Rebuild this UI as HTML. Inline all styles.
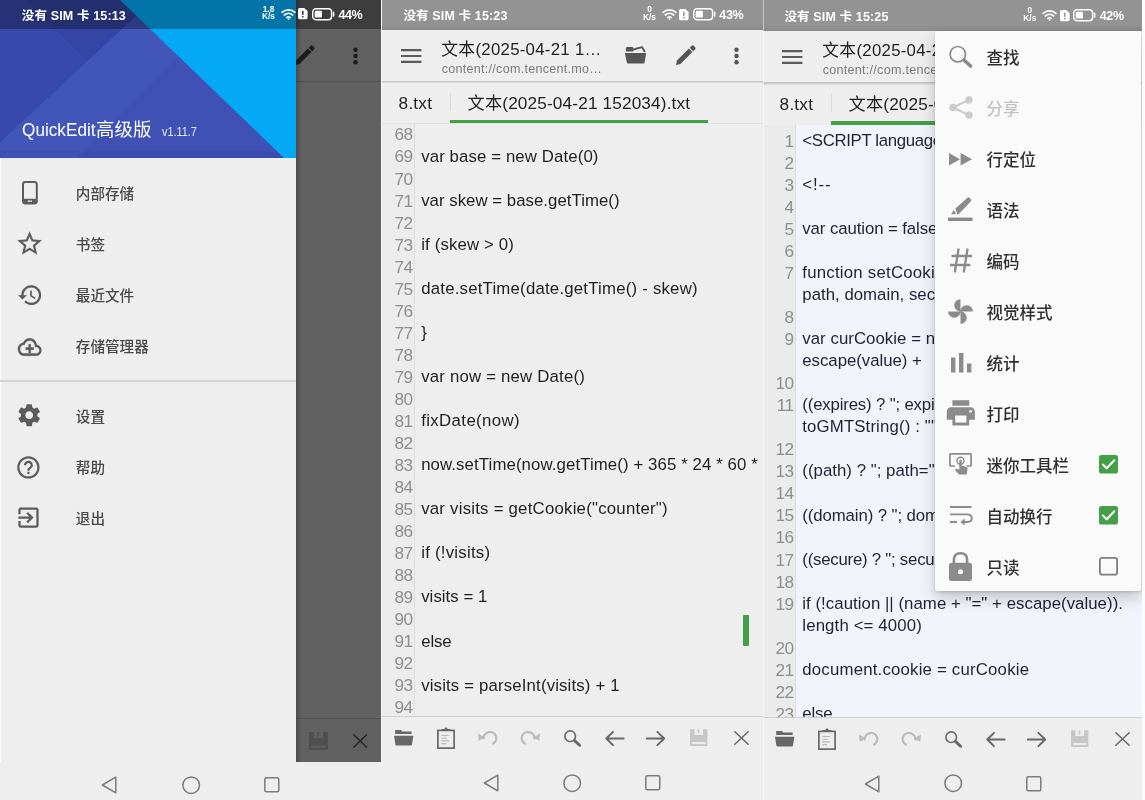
<!DOCTYPE html>
<html lang="zh-CN">
<head>
<meta charset="utf-8">
<title>QuickEdit</title>
<style>
*{box-sizing:border-box;margin:0;padding:0}
html,body{width:1145px;height:800px;overflow:hidden;background:#eeeeee}
body{position:relative;font-family:"Liberation Sans","Noto Sans CJK SC",sans-serif;color:#222}
.abs{position:absolute;display:block}
.panel{position:absolute;top:0;height:800px;overflow:hidden;background:#eeeeee;will-change:transform}
.t{position:absolute;display:block;white-space:nowrap;line-height:20px}
svg{position:absolute;overflow:visible;display:block}
</style>
</head>
<body>
<div class="panel" id="p1" style="left:0;width:382px">
<div class="abs" style="left:296px;top:0;width:85px;height:762px;background:#616161"></div><div class="abs" style="left:296px;top:0;width:85px;height:29px;background:#3d3d3d"></div><i class="abs" style="left:296px;top:80.500px;width:85px;height:1.600px;background:#505050"></i><i class="abs" style="left:296px;top:717.600px;width:85px;height:1.400px;background:#545454"></i><i class="abs" style="left:381px;top:0;width:1px;height:800px;background:#f7f7f7"></i><svg style="left:292.2px;top:42.8px" width="25" height="25" viewBox="0 0 25 25"><g transform="translate(12.500,12.500) rotate(-45)"><path d="M-13.400 0L-9.600 -2.500H7.300V2.500H-9.600Z" fill="#1d1d1d"/><path d="M8.400 -2.500H11.200Q12.600 -2.500 12.600 -1.100V1.100Q12.600 2.500 11.200 2.500H8.400Z" fill="#1d1d1d"/></g></svg><svg style="left:353.2px;top:46.5px" width="5" height="18" viewBox="0 0 5 18"><circle cx="2.500" cy="2.65" r="2.250" fill="#1d1d1d"/><circle cx="2.500" cy="9" r="2.250" fill="#1d1d1d"/><circle cx="2.500" cy="15.35" r="2.250" fill="#1d1d1d"/></svg><svg style="left:308.6px;top:731.8px" width="18.8" height="18" viewBox="0 0 18.8 18"><path d="M0 0H4.700V6.200H14.100V0H18.800V18H0Z" fill="#4f4f4f" /><rect x="8.300" y="0" width="1.700" height="4.400" fill="#4f4f4f"/><rect x="2" y="13.600" width="14.800" height="2.300" fill="#5e5e5e"/></svg><svg style="left:353px;top:733.5px" width="14.4" height="14" viewBox="0 0 14.4 14"><path d="M0.800 0.800L13.600 13.200M13.600 0.800L0.800 13.200" stroke="#262626" stroke-width="1.500" stroke-linecap="round"/></svg><i class="abs" style="left:296px;top:0;width:6px;height:762px;background:linear-gradient(90deg,rgba(0,0,0,.22),rgba(0,0,0,0))"></i><div class="abs" style="left:0;top:0;width:296px;height:762px;background:#eeeeee"></div><i class="abs" style="left:0;top:158px;width:1.200px;height:642px;background:#fbfbfb"></i><svg style="left:0px;top:0px" width="296" height="158" viewBox="0 0 296 158"><rect x="0" y="0" width="296" height="158" fill="#3f51b5"/><polygon points="0,0 153.400,0 0,142.500" fill="#3949ab"/><polygon points="26,0 153.400,0 87.400,61.400" fill="#3545a3"/><polygon points="153.400,0 235,0 77,158 0,158 0,142.500" fill="#4256ba"/><rect x="0" y="151.500" width="296" height="6.500" fill="#1a237e" fill-opacity="0.10"/><polygon points="120,0 296,0 296,158 284,158" fill="#03a9f4"/><rect x="0" y="0" width="296" height="29" fill="#000" fill-opacity="0.31"/></svg><span class="t" id="p1st" style="left:21.80px;top:5.77px;font-size:12.5px;color:#fff;font-weight:bold;letter-spacing:0.141px;">没有 SIM 卡 15:13</span><span class="t" style="left:259px;top:5.7px;width:19px;text-align:center;font-size:8.400px;line-height:7.400px;font-weight:bold;color:#fff;white-space:normal">1.8<br>K/s</span><svg style="left:281px;top:7.5px" width="15" height="12" viewBox="0 0 15 12"><path d="M1 4.300a9.800 9.800 0 0 1 13 0" fill="none" stroke="#fff" stroke-width="1.700" stroke-linecap="round"/><path d="M3.300 7a6.400 6.400 0 0 1 8.400 0" fill="none" stroke="#fff" stroke-width="1.700" stroke-linecap="round"/><path d="M5.600 9.500a3 3 0 0 1 3.800 0" fill="none" stroke="#fff" stroke-width="1.600" stroke-linecap="round"/><circle cx="7.500" cy="11" r="1" fill="#fff"/></svg><svg style="left:298.29999999999995px;top:8.1px" width="9.6" height="11.2" viewBox="0 0 9.6 11.2"><path d="M1.600 0H6.200L9.600 3V9.600A1.600 1.600 0 0 1 8 11.200H1.600A1.600 1.600 0 0 1 0 9.600V1.600A1.600 1.600 0 0 1 1.600 0Z" fill="#fff"/><rect x="4" y="2.800" width="1.600" height="4" fill="#3d3d3d"/><rect x="4" y="7.900" width="1.600" height="1.500" fill="#3d3d3d"/></svg><svg style="left:312px;top:7.699999999999999px" width="22.5" height="12.4" viewBox="0 0 22.5 12.4"><rect x="0.700" y="0.700" width="18.900" height="11" rx="3.200" fill="none" stroke="#fff" stroke-width="1.400"/><rect x="2.700" y="2.800" width="7.200" height="6.800" rx="1.200" fill="#fff"/><rect x="20.800" y="3.600" width="1.600" height="5.200" rx="0.800" fill="#fff"/></svg><span class="t" id="p1pct" style="left:338.60px;top:5.07px;font-size:12.5px;color:#fff;font-weight:bold;letter-spacing:-0.477px;">44%</span><span class="t" style="left:22.00px;top:120.22px;font-size:18.4px;color:#fff;letter-spacing:0;transform:scaleX(0.935);transform-origin:0 50%;">QuickEdit</span><span class="t" id="p1qc" style="left:96.00px;top:120.22px;font-size:18.4px;color:#fff;letter-spacing:0.071px;">高级版</span><span class="t" style="left:162.40px;top:122.03px;font-size:12.6px;color:#e8eaf6;letter-spacing:0;transform:scaleX(0.861);transform-origin:0 50%;">v1.11.7</span><span class="t" style="left:75.80px;top:183.69px;font-size:14.6px;color:#484848;font-weight:500;">内部存储</span><span class="t" style="left:75.80px;top:234.69px;font-size:14.6px;color:#484848;font-weight:500;">书签</span><span class="t" style="left:75.80px;top:285.69px;font-size:14.6px;color:#484848;font-weight:500;">最近文件</span><span class="t" style="left:75.80px;top:336.69px;font-size:14.6px;color:#484848;font-weight:500;">存储管理器</span><span class="t" style="left:75.80px;top:406.99px;font-size:14.6px;color:#484848;font-weight:500;">设置</span><span class="t" style="left:75.80px;top:457.99px;font-size:14.6px;color:#484848;font-weight:500;">帮助</span><span class="t" style="left:75.80px;top:508.99px;font-size:14.6px;color:#484848;font-weight:500;">退出</span><svg style="left:21.8px;top:180.5px" width="15.8" height="23.4" viewBox="0 0 15.8 23.4"><rect x="1" y="1" width="13.800" height="21.400" rx="2.400" fill="none" stroke="#5b5b5b" stroke-width="2"/><rect x="1" y="17.800" width="13.800" height="4.600" fill="#5b5b5b"/><rect x="5.600" y="19.600" width="4.600" height="1.200" rx="0.600" fill="#eeeeee"/></svg><svg style="left:14.7px;top:229.3px" width="29.2" height="29.2" viewBox="0 0 24 24"><path d="M22 9.240l-7.190-.62L12 2 9.190 8.630 2 9.240l5.460 4.730L5.820 21 12 17.270 18.180 21l-1.630-7.030L22 9.240zM12 15.400l-3.760 2.270 1-4.280-3.320-2.880 4.380-.38L12 6.100l1.710 4.040 4.380.38-3.320 2.880 1 4.280L12 15.400z" fill="#5b5b5b" stroke="#5b5b5b" stroke-width="0.15"/></svg><svg style="left:16.6px;top:281.9px" width="26.3" height="26.3" viewBox="0 0 24 24"><path d="M13 3c-4.970 0-9 4.030-9 9H1l3.890 3.890.07.14L9 12H6c0-3.870 3.130-7 7-7s7 3.130 7 7-3.130 7-7 7c-1.930 0-3.680-.79-4.940-2.060l-1.420 1.420C8.270 19.990 10.510 21 13 21c4.970 0 9-4.030 9-9s-4.030-9-9-9zm-1 5v5l4.280 2.540.72-1.210-3.500-2.080V8H12z" fill="#5b5b5b" stroke="#5b5b5b" stroke-width="0.1"/></svg><svg preserveAspectRatio="none" style="left:17.6px;top:333.8px" width="23.4" height="26" viewBox="0 0 24 24"><path d="M19.350 10.040C18.670 6.590 15.640 4 12 4 9.110 4 6.600 5.640 5.350 8.040 2.340 8.360 0 10.910 0 14c0 3.310 2.690 6 6 6h13c2.760 0 5-2.240 5-5 0-2.640-2.050-4.780-4.650-4.960zM19 18H6c-2.210 0-4-1.790-4-4s1.790-4 4-4h.71C7.370 7.690 9.480 6 12 6c3.040 0 5.500 2.460 5.500 5.500v.5H19c1.660 0 3 1.340 3 3s-1.340 3-3 3zM11 9.500h2v3h3v2h-3v3h-2v-3H8v-2h3z" fill="#5b5b5b" stroke="#5b5b5b" stroke-width="0.4"/></svg><i class="abs" style="left:0;top:380.400px;width:296px;height:1.200px;background:#d4d4d4"></i><svg style="left:16.0px;top:401.8px" width="26.4" height="26.4" viewBox="0 0 24 24"><path d="M19.430 12.980c.04-.32.07-.64.07-.98s-.03-.66-.07-.98l2.110-1.650c.19-.15.24-.42.120-.64l-2-3.460c-.12-.22-.39-.3-.61-.22l-2.490 1c-.52-.4-1.080-.73-1.690-.98l-.38-2.650C14.460 2.180 14.250 2 14 2h-4c-.25 0-.46.18-.49.42l-.38 2.650c-.61.25-1.170.59-1.690.98l-2.490-1c-.23-.09-.49 0-.61.22l-2 3.460c-.13.22-.07.49.120.64l2.110 1.650c-.04.32-.07.65-.07.98s.03.66.07.98l-2.110 1.650c-.19.15-.24.42-.12.64l2 3.460c.12.22.39.3.61.22l2.490-1c.52.4 1.080.73 1.690.98l.38 2.650c.03.24.24.42.49.42h4c.25 0 .46-.18.49-.42l.38-2.650c.61-.25 1.170-.59 1.690-.98l2.490 1c.23.09.49 0 .61-.22l2-3.460c.12-.22.07-.49-.12-.64l-2.110-1.650zM12 15.500c-1.930 0-3.500-1.570-3.500-3.500s1.570-3.500 3.500-3.500 3.500 1.570 3.500 3.500-1.570 3.500-3.500 3.500z" fill="#5b5b5b" /></svg><svg style="left:15.3px;top:453.6px" width="26.8" height="26.8" viewBox="0 0 24 24"><path d="M11 18h2v-2h-2v2zm1-16C6.480 2 2 6.480 2 12s4.480 10 10 10 10-4.480 10-10S17.520 2 12 2zm0 18c-4.410 0-8-3.590-8-8s3.590-8 8-8 8 3.590 8 8-3.590 8-8 8zm0-14c-2.210 0-4 1.790-4 4h2c0-1.100.9-2 2-2s2 .9 2 2c0 2-3 1.750-3 5h2c0-2.250 3-2.500 3-5 0-2.210-1.790-4-4-4z" fill="#5b5b5b" /></svg><svg style="left:15.2px;top:504.3px" width="27" height="27" viewBox="0 0 24 24"><path d="M10.090 15.590L11.500 17l5-5-5-5-1.410 1.410L12.670 11H3v2h9.670l-2.580 2.590zM19 3H5c-1.110 0-2 .9-2 2v4h2V5h14v14H5v-4H3v4c0 1.100.89 2 2 2h14c1.100 0 2-.9 2-2V5c0-1.100-.9-2-2-2z" fill="#5b5b5b" /></svg><div class="abs" style="left:0;top:762px;width:382px;height:38px;background:#eeeeee"></div><svg style="left:101.0px;top:776px" width="16" height="18" viewBox="0 0 16 18"><path d="M14.800 1.200V16.800L1.400 9Z" fill="none" stroke="#7b7b7b" stroke-width="1.500" stroke-linejoin="round"/></svg><svg style="left:181.5px;top:775.5px" width="18.4" height="18.4" viewBox="0 0 18.4 18.4"><circle cx="9.200" cy="9.200" r="8.300" fill="none" stroke="#7b7b7b" stroke-width="1.500"/></svg><svg style="left:263.5px;top:777px" width="15.6" height="15.6" viewBox="0 0 15.6 15.6"><rect x="0.800" y="0.800" width="14" height="14" rx="1.600" fill="none" stroke="#7b7b7b" stroke-width="1.500"/></svg>
</div>
<div class="panel" id="p2" style="left:382px;width:381px">
<div class="abs" style="left:0;top:0;width:381px;height:29.500px;background:linear-gradient(#939393 0,#939393 80%,#8a8a8a 100%)"></div>
<span class="t" id="p2st" style="left:21.40px;top:5.97px;font-size:12.5px;color:#fff;font-weight:bold;letter-spacing:0.141px;">没有 SIM 卡 15:23</span><span class="t" style="left:258px;top:6.2px;width:19px;text-align:center;font-size:8.400px;line-height:7.400px;font-weight:bold;color:#fff;white-space:normal">0<br>K/s</span><svg style="left:280px;top:8px" width="15" height="12" viewBox="0 0 15 12"><path d="M1 4.300a9.800 9.800 0 0 1 13 0" fill="none" stroke="#fff" stroke-width="1.700" stroke-linecap="round"/><path d="M3.300 7a6.400 6.400 0 0 1 8.400 0" fill="none" stroke="#fff" stroke-width="1.700" stroke-linecap="round"/><path d="M5.600 9.500a3 3 0 0 1 3.800 0" fill="none" stroke="#fff" stroke-width="1.600" stroke-linecap="round"/><circle cx="7.500" cy="11" r="1" fill="#fff"/></svg><svg style="left:297.29999999999995px;top:8.6px" width="9.6" height="11.2" viewBox="0 0 9.6 11.2"><path d="M1.600 0H6.200L9.600 3V9.600A1.600 1.600 0 0 1 8 11.200H1.600A1.600 1.600 0 0 1 0 9.600V1.600A1.600 1.600 0 0 1 1.600 0Z" fill="#fff"/><rect x="4" y="2.800" width="1.600" height="4" fill="#939393"/><rect x="4" y="7.900" width="1.600" height="1.500" fill="#939393"/></svg><svg style="left:311px;top:8.2px" width="22.5" height="12.4" viewBox="0 0 22.5 12.4"><rect x="0.700" y="0.700" width="18.900" height="11" rx="3.200" fill="none" stroke="#fff" stroke-width="1.400"/><rect x="2.700" y="2.800" width="7.200" height="6.800" rx="1.200" fill="#fff"/><rect x="20.800" y="3.600" width="1.600" height="5.200" rx="0.800" fill="#fff"/></svg><span class="t" id="p2pct" style="left:337.30px;top:5.27px;font-size:12.5px;color:#fff;font-weight:bold;letter-spacing:-0.344px;">43%</span>
<svg style="left:19.399999999999977px;top:48.7px" width="20.4" height="14" viewBox="0 0 20.4 14"><path d="M0 1.100H20.400M0 7H20.400M0 12.900H20.400" stroke="#5a5a5a" stroke-width="2.100" fill="none"/></svg><span class="t" id="p2title" style="left:59.30px;top:39.78px;font-size:16.8px;color:#1f1f1f;letter-spacing:0.282px;">文本(2025-04-21 1…</span><span class="t" id="p2sub" style="left:59.80px;top:58.63px;font-size:12.6px;color:#7b7b7b;letter-spacing:0.252px;">content://com.tencent.mo…</span><svg style="left:243px;top:46.3px" width="21.4" height="17.6" viewBox="0 0 21.4 17.6"><path d="M1 2.200Q1 1 2.200 1H7.100Q8.300 1 8.300 2.200V5.400H1Z" fill="#555" /><path d="M8 3.700L17 1.100L19.500 5.300" fill="none" stroke="#555" stroke-width="1.900" stroke-linejoin="round" stroke-linecap="round"/><path d="M-0.200 7.100H21.200L19.600 16.400Q19.400 17.600 18.200 17.600H3.300Q2.100 17.600 1.900 16.400Z" fill="#555" /></svg><svg style="left:291.4px;top:43.0px" width="25" height="25" viewBox="0 0 25 25"><g transform="translate(12.500,12.500) rotate(-45)"><path d="M-13.400 0L-9.600 -2.500H7.300V2.500H-9.600Z" fill="#555"/><path d="M8.400 -2.500H11.200Q12.600 -2.500 12.600 -1.100V1.100Q12.600 2.500 11.200 2.500H8.400Z" fill="#555"/></g></svg><svg style="left:352.4px;top:46.75px" width="5" height="18" viewBox="0 0 5 18"><circle cx="2.500" cy="2.65" r="2.250" fill="#555"/><circle cx="2.500" cy="9" r="2.250" fill="#555"/><circle cx="2.500" cy="15.35" r="2.250" fill="#555"/></svg>
<i class="abs" style="left:0;top:80.600px;width:381px;height:2.400px;background:linear-gradient(#cdcdcd,#c6c6c6 40%,#e4e4e4)"></i>
<span class="t" id="p2tab1" style="left:16.60px;top:93.24px;font-size:17.2px;color:#1f1f1f;letter-spacing:0.223px;">8.txt</span><i class="abs" style="left:67.80000000000001px;top:93px;width:1.200px;height:18px;background:#dadada"></i><span class="t" id="p2tab2" style="left:85.60px;top:93.24px;font-size:17.2px;color:#1f1f1f;letter-spacing:0.152px;">文本(2025-04-21 152034).txt</span><i class="abs" style="left:68px;top:120.3px;width:258px;height:3.400px;background:#43a047"></i>
<i class="abs" style="left:0;top:123.400px;width:381px;height:1px;background:#e2e2e2"></i><div class="abs" style="left:0;top:124px;width:381px;height:592px;overflow:hidden"><i class="abs" style="left:0;top:0;width:33px;height:592px;background:#ececec;border-right:1px solid #dedede"></i></div>
<div class="abs" style="left:0;top:124px;width:379px;height:592px;overflow:hidden"><div class="abs" style="left:0;top:-124px;width:600px;height:800px"><span class="t" style="left:0.00px;top:124.44px;font-size:17.2px;color:#8e8e8e;width:30.5px;text-align:right;letter-spacing:-0.6px;">68</span><span class="t" style="left:0.00px;top:146.48px;font-size:17.2px;color:#8e8e8e;width:30.5px;text-align:right;letter-spacing:-0.6px;">69</span><span class="t" id="p2c1" style="left:39.20px;top:146.62px;font-size:16.8px;color:#1f1f1f;letter-spacing:0.113px;">var base = new Date(0)</span><span class="t" style="left:0.00px;top:168.52px;font-size:17.2px;color:#8e8e8e;width:30.5px;text-align:right;letter-spacing:-0.6px;">70</span><span class="t" style="left:0.00px;top:190.56px;font-size:17.2px;color:#8e8e8e;width:30.5px;text-align:right;letter-spacing:-0.6px;">71</span><span class="t" id="p2c3" style="left:39.20px;top:190.70px;font-size:16.8px;color:#1f1f1f;letter-spacing:0.030px;">var skew = base.getTime()</span><span class="t" style="left:0.00px;top:212.60px;font-size:17.2px;color:#8e8e8e;width:30.5px;text-align:right;letter-spacing:-0.6px;">72</span><span class="t" style="left:0.00px;top:234.64px;font-size:17.2px;color:#8e8e8e;width:30.5px;text-align:right;letter-spacing:-0.6px;">73</span><span class="t" id="p2c5" style="left:39.20px;top:234.78px;font-size:16.8px;color:#1f1f1f;letter-spacing:0.137px;">if (skew &gt; 0)</span><span class="t" style="left:0.00px;top:256.68px;font-size:17.2px;color:#8e8e8e;width:30.5px;text-align:right;letter-spacing:-0.6px;">74</span><span class="t" style="left:0.00px;top:278.72px;font-size:17.2px;color:#8e8e8e;width:30.5px;text-align:right;letter-spacing:-0.6px;">75</span><span class="t" id="p2c7" style="left:39.20px;top:278.86px;font-size:16.8px;color:#1f1f1f;letter-spacing:0.211px;">date.setTime(date.getTime() - skew)</span><span class="t" style="left:0.00px;top:300.76px;font-size:17.2px;color:#8e8e8e;width:30.5px;text-align:right;letter-spacing:-0.6px;">76</span><span class="t" style="left:0.00px;top:322.80px;font-size:17.2px;color:#8e8e8e;width:30.5px;text-align:right;letter-spacing:-0.6px;">77</span><span class="t" id="p2c9" style="left:39.20px;top:322.94px;font-size:16.8px;color:#1f1f1f;letter-spacing:0.17px;">}</span><span class="t" style="left:0.00px;top:344.84px;font-size:17.2px;color:#8e8e8e;width:30.5px;text-align:right;letter-spacing:-0.6px;">78</span><span class="t" style="left:0.00px;top:366.88px;font-size:17.2px;color:#8e8e8e;width:30.5px;text-align:right;letter-spacing:-0.6px;">79</span><span class="t" id="p2c11" style="left:39.20px;top:367.02px;font-size:16.8px;color:#1f1f1f;letter-spacing:0.197px;">var now = new Date()</span><span class="t" style="left:0.00px;top:388.92px;font-size:17.2px;color:#8e8e8e;width:30.5px;text-align:right;letter-spacing:-0.6px;">80</span><span class="t" style="left:0.00px;top:410.96px;font-size:17.2px;color:#8e8e8e;width:30.5px;text-align:right;letter-spacing:-0.6px;">81</span><span class="t" id="p2c13" style="left:39.20px;top:411.10px;font-size:16.8px;color:#1f1f1f;letter-spacing:0.383px;">fixDate(now)</span><span class="t" style="left:0.00px;top:433.00px;font-size:17.2px;color:#8e8e8e;width:30.5px;text-align:right;letter-spacing:-0.6px;">82</span><span class="t" style="left:0.00px;top:455.04px;font-size:17.2px;color:#8e8e8e;width:30.5px;text-align:right;letter-spacing:-0.6px;">83</span><span class="t" id="p2c15" style="left:39.20px;top:455.18px;font-size:16.8px;color:#1f1f1f;letter-spacing:0.104px;">now.setTime(now.getTime() + 365 * 24 * 60 *</span><span class="t" style="left:0.00px;top:477.08px;font-size:17.2px;color:#8e8e8e;width:30.5px;text-align:right;letter-spacing:-0.6px;">84</span><span class="t" style="left:0.00px;top:499.12px;font-size:17.2px;color:#8e8e8e;width:30.5px;text-align:right;letter-spacing:-0.6px;">85</span><span class="t" id="p2c17" style="left:39.20px;top:499.26px;font-size:16.8px;color:#1f1f1f;letter-spacing:0.229px;">var visits = getCookie("counter")</span><span class="t" style="left:0.00px;top:521.16px;font-size:17.2px;color:#8e8e8e;width:30.5px;text-align:right;letter-spacing:-0.6px;">86</span><span class="t" style="left:0.00px;top:543.20px;font-size:17.2px;color:#8e8e8e;width:30.5px;text-align:right;letter-spacing:-0.6px;">87</span><span class="t" id="p2c19" style="left:39.20px;top:543.34px;font-size:16.8px;color:#1f1f1f;letter-spacing:0.243px;">if (!visits)</span><span class="t" style="left:0.00px;top:565.24px;font-size:17.2px;color:#8e8e8e;width:30.5px;text-align:right;letter-spacing:-0.6px;">88</span><span class="t" style="left:0.00px;top:587.28px;font-size:17.2px;color:#8e8e8e;width:30.5px;text-align:right;letter-spacing:-0.6px;">89</span><span class="t" id="p2c21" style="left:39.20px;top:587.42px;font-size:16.8px;color:#1f1f1f;letter-spacing:0.035px;">visits = 1</span><span class="t" style="left:0.00px;top:609.32px;font-size:17.2px;color:#8e8e8e;width:30.5px;text-align:right;letter-spacing:-0.6px;">90</span><span class="t" style="left:0.00px;top:631.36px;font-size:17.2px;color:#8e8e8e;width:30.5px;text-align:right;letter-spacing:-0.6px;">91</span><span class="t" id="p2c23" style="left:39.20px;top:631.50px;font-size:16.8px;color:#1f1f1f;letter-spacing:-0.124px;">else</span><span class="t" style="left:0.00px;top:653.40px;font-size:17.2px;color:#8e8e8e;width:30.5px;text-align:right;letter-spacing:-0.6px;">92</span><span class="t" style="left:0.00px;top:675.44px;font-size:17.2px;color:#8e8e8e;width:30.5px;text-align:right;letter-spacing:-0.6px;">93</span><span class="t" id="p2c25" style="left:39.20px;top:675.58px;font-size:16.8px;color:#1f1f1f;letter-spacing:0.156px;">visits = parseInt(visits) + 1</span><span class="t" style="left:0.00px;top:697.48px;font-size:17.2px;color:#8e8e8e;width:30.5px;text-align:right;letter-spacing:-0.6px;">94</span></div></div>
<i class="abs" style="left:360.5px;top:615px;width:6px;height:31px;background:#43a047;border-radius:1px"></i>
<i class="abs" style="left:0;top:715.500px;width:381px;height:1.500px;background:#cfcfcf"></i><i class="abs" style="left:0;top:717px;width:381px;height:83px;background:#eeeeee"></i><svg style="left:12.199999999999989px;top:730px" width="19.4" height="15.6" viewBox="0 0 19.4 15.6"><path d="M1.200 0H7.600V1.400H17.600V4H1.200Z" fill="#676767" /><path d="M0 5.800H19.400L18 14.600Q17.900 15.600 16.900 15.600H2.500Q1.500 15.600 1.400 14.600Z" fill="#676767" /></svg><svg style="left:55px;top:727px" width="18" height="22" viewBox="0 0 18 22"><rect x="0.900" y="3.400" width="16.200" height="17.700" fill="none" stroke="#676767" stroke-width="1.700"/><path d="M4.500 3.800V2H7.200L9 0L10.800 2H13.500V3.800Z" fill="#676767" /><path d="M4.300 8.500H12M4.300 11.200H10M4.300 13.900H12M4.300 16.600H9" stroke="#b9b9b9" stroke-width="1.100" fill="none"/></svg><svg style="left:108.30000000000001px;top:738.4px" width="1" height="1" viewBox="0 0 1 1"><g><path d="M-6.300 0.400A6.300 6.300 0 1 1 3.200 5.600" fill="none" stroke="#bcbcbc" stroke-width="2.300" stroke-linecap="round"/><path d="M-12 -4.500L-4.800 -0.400L-11.300 2.800Z" fill="#bcbcbc" /></g></svg><svg style="left:145.70000000000005px;top:738.4px" width="1" height="1" viewBox="0 0 1 1"><g transform="scale(-1,1)"><path d="M-6.300 0.400A6.300 6.300 0 1 1 3.200 5.600" fill="none" stroke="#bcbcbc" stroke-width="2.300" stroke-linecap="round"/><path d="M-12 -4.500L-4.800 -0.400L-11.300 2.800Z" fill="#bcbcbc" /></g></svg><svg style="left:181.60000000000002px;top:730px" width="17.5" height="17.5" viewBox="0 0 17.5 17.5"><circle cx="6.200" cy="6.200" r="5.300" fill="none" stroke="#676767" stroke-width="1.600"/><path d="M10.600 10.600L15.600 15.300" stroke="#676767" stroke-width="2.900" stroke-linecap="round"/></svg><svg style="left:222.60000000000002px;top:730.5px" width="19.4" height="15" viewBox="0 0 19.4 15"><path d="M18.600 7.500H1.200M8 0.800L1.200 7.500L8 14.200" fill="none" stroke="#676767" stroke-width="1.900" stroke-linecap="round" stroke-linejoin="round"/></svg><svg style="left:264.20000000000005px;top:730.5px" width="19.4" height="15" viewBox="0 0 19.4 15"><path d="M0.800 7.500H18.200M11.400 0.800L18.200 7.500L11.400 14.200" fill="none" stroke="#676767" stroke-width="1.900" stroke-linecap="round" stroke-linejoin="round"/></svg><svg style="left:307.79999999999995px;top:729.4px" width="17.4" height="17.4" viewBox="0 0 18.800 18"><path d="M0 0H4.700V6.200H14.100V0H18.800V18H0Z" fill="#c6c6c6" /><rect x="8.300" y="0" width="1.700" height="4.400" fill="#c6c6c6"/><rect x="2" y="13.600" width="14.800" height="2.300" fill="#ececec"/></svg><svg style="left:352px;top:731px" width="15" height="14" viewBox="0 0 15 14"><path d="M0.800 0.800L14.200 13.200M14.200 0.800L0.800 13.200" stroke="#676767" stroke-width="1.500" stroke-linecap="round"/></svg><svg style="left:100.5px;top:774px" width="16" height="18" viewBox="0 0 16 18"><path d="M14.800 1.200V16.800L1.400 9Z" fill="none" stroke="#7b7b7b" stroke-width="1.500" stroke-linejoin="round"/></svg><svg style="left:181px;top:773.5px" width="18.4" height="18.4" viewBox="0 0 18.4 18.4"><circle cx="9.200" cy="9.200" r="8.300" fill="none" stroke="#7b7b7b" stroke-width="1.500"/></svg><svg style="left:263px;top:775px" width="15.6" height="15.6" viewBox="0 0 15.6 15.6"><rect x="0.800" y="0.800" width="14" height="14" rx="1.600" fill="none" stroke="#7b7b7b" stroke-width="1.500"/></svg>
</div>
<div class="panel" id="p3" style="left:763px;width:382px">
<div class="abs" style="left:0;top:0;width:382px;height:30.500px;background:linear-gradient(#939393 0,#939393 80%,#8a8a8a 100%)"></div>
<span class="t" id="p3st" style="left:21.40px;top:6.97px;font-size:12.5px;color:#fff;font-weight:bold;letter-spacing:0.141px;">没有 SIM 卡 15:25</span><span class="t" style="left:257.3px;top:7.2px;width:19px;text-align:center;font-size:8.400px;line-height:7.400px;font-weight:bold;color:#fff;white-space:normal">0<br>K/s</span><svg style="left:279.3px;top:9px" width="15" height="12" viewBox="0 0 15 12"><path d="M1 4.300a9.800 9.800 0 0 1 13 0" fill="none" stroke="#fff" stroke-width="1.700" stroke-linecap="round"/><path d="M3.300 7a6.400 6.400 0 0 1 8.400 0" fill="none" stroke="#fff" stroke-width="1.700" stroke-linecap="round"/><path d="M5.600 9.500a3 3 0 0 1 3.800 0" fill="none" stroke="#fff" stroke-width="1.600" stroke-linecap="round"/><circle cx="7.500" cy="11" r="1" fill="#fff"/></svg><svg style="left:296.59999999999997px;top:9.6px" width="9.6" height="11.2" viewBox="0 0 9.6 11.2"><path d="M1.600 0H6.200L9.600 3V9.600A1.600 1.600 0 0 1 8 11.200H1.600A1.600 1.600 0 0 1 0 9.600V1.600A1.600 1.600 0 0 1 1.600 0Z" fill="#fff"/><rect x="4" y="2.800" width="1.600" height="4" fill="#939393"/><rect x="4" y="7.900" width="1.600" height="1.500" fill="#939393"/></svg><svg style="left:310.3px;top:9.2px" width="22.5" height="12.4" viewBox="0 0 22.5 12.4"><rect x="0.700" y="0.700" width="18.900" height="11" rx="3.200" fill="none" stroke="#fff" stroke-width="1.400"/><rect x="2.700" y="2.800" width="7.200" height="6.800" rx="1.200" fill="#fff"/><rect x="20.800" y="3.600" width="1.600" height="5.200" rx="0.800" fill="#fff"/></svg><span class="t" id="p3pct" style="left:336.70px;top:6.27px;font-size:12.5px;color:#fff;font-weight:bold;letter-spacing:-0.344px;">42%</span>
<svg style="left:19.399999999999977px;top:49.7px" width="20.4" height="14" viewBox="0 0 20.4 14"><path d="M0 1.100H20.400M0 7H20.400M0 12.900H20.400" stroke="#5a5a5a" stroke-width="2.100" fill="none"/></svg><span class="t" id="p3title" style="left:59.30px;top:40.78px;font-size:16.8px;color:#1f1f1f;letter-spacing:0.282px;">文本(2025-04-21 1…</span><span class="t" id="p3sub" style="left:59.80px;top:59.63px;font-size:12.6px;color:#7b7b7b;letter-spacing:0.252px;">content://com.tencent.mo…</span>
<i class="abs" style="left:0;top:81.800px;width:382px;height:3.600px;background:linear-gradient(#c9c9c9,#c4c4c4 30%,#e6e6e6)"></i>
<span class="t" id="p3tab1" style="left:16.60px;top:94.24px;font-size:17.2px;color:#1f1f1f;letter-spacing:0.223px;">8.txt</span><i class="abs" style="left:67.80000000000001px;top:94px;width:1.200px;height:18px;background:#dadada"></i><span class="t" id="p3tab2" style="left:85.60px;top:94.24px;font-size:17.2px;color:#1f1f1f;letter-spacing:0.152px;">文本(2025-04-21 152034).txt</span><i class="abs" style="left:68px;top:121.3px;width:258px;height:3.400px;background:#43a047"></i><div class="abs" style="left:0;top:125px;width:382px;height:592px;overflow:hidden;background:#f2f4fc"><i class="abs" style="left:0;top:0;width:33px;height:592px;background:#ebebeb;border-right:1px solid #dcdcdc"></i><i class="abs" style="left:379px;top:0;width:3px;height:592px;background:#e6e6ea"></i><div class="abs" style="left:0;top:-125px;width:700px;height:800px"><span class="t" style="left:0.00px;top:130.74px;font-size:17.2px;color:#8e8e8e;width:30.5px;text-align:right;letter-spacing:-0.6px;">1</span><span class="t" id="p3c0" style="left:39.30px;top:130.88px;font-size:16.8px;color:#1f2233;letter-spacing:-0.328px;">&lt;SCRIPT language="JavaScript"&gt;</span><span class="t" style="left:0.00px;top:152.78px;font-size:17.2px;color:#8e8e8e;width:30.5px;text-align:right;letter-spacing:-0.6px;">2</span><span class="t" style="left:0.00px;top:174.82px;font-size:17.2px;color:#8e8e8e;width:30.5px;text-align:right;letter-spacing:-0.6px;">3</span><span class="t" id="p3c2" style="left:39.30px;top:174.96px;font-size:16.8px;color:#1f2233;letter-spacing:0.890px;">&lt;!--</span><span class="t" style="left:0.00px;top:196.86px;font-size:17.2px;color:#8e8e8e;width:30.5px;text-align:right;letter-spacing:-0.6px;">4</span><span class="t" style="left:0.00px;top:218.90px;font-size:17.2px;color:#8e8e8e;width:30.5px;text-align:right;letter-spacing:-0.6px;">5</span><span class="t" id="p3c4" style="left:39.30px;top:219.04px;font-size:16.8px;color:#1f2233;letter-spacing:-0.090px;">var caution = false</span><span class="t" style="left:0.00px;top:240.94px;font-size:17.2px;color:#8e8e8e;width:30.5px;text-align:right;letter-spacing:-0.6px;">6</span><span class="t" style="left:0.00px;top:262.98px;font-size:17.2px;color:#8e8e8e;width:30.5px;text-align:right;letter-spacing:-0.6px;">7</span><span class="t" id="p3c6" style="left:39.30px;top:263.12px;font-size:16.8px;color:#1f2233;letter-spacing:0.231px;">function setCookie(name, value, expires,</span><span class="t" id="p3c7" style="left:39.30px;top:285.16px;font-size:16.8px;color:#1f2233;letter-spacing:0.020px;">path, domain, secure) {</span><span class="t" style="left:0.00px;top:307.06px;font-size:17.2px;color:#8e8e8e;width:30.5px;text-align:right;letter-spacing:-0.6px;">8</span><span class="t" style="left:0.00px;top:329.10px;font-size:17.2px;color:#8e8e8e;width:30.5px;text-align:right;letter-spacing:-0.6px;">9</span><span class="t" id="p3c9" style="left:39.30px;top:329.24px;font-size:16.8px;color:#1f2233;letter-spacing:0.047px;">var curCookie = name + "=" +</span><span class="t" id="p3c10" style="left:39.30px;top:351.28px;font-size:16.8px;color:#1f2233;letter-spacing:-0.025px;">escape(value) +</span><span class="t" style="left:0.00px;top:373.18px;font-size:17.2px;color:#8e8e8e;width:30.5px;text-align:right;letter-spacing:-0.6px;">10</span><span class="t" style="left:0.00px;top:395.22px;font-size:17.2px;color:#8e8e8e;width:30.5px;text-align:right;letter-spacing:-0.6px;">11</span><span class="t" id="p3c12" style="left:39.30px;top:395.36px;font-size:16.8px;color:#1f2233;letter-spacing:-0.166px;">((expires) ? "; expires=" + expires.</span><span class="t" id="p3c13" style="left:39.30px;top:417.40px;font-size:16.8px;color:#1f2233;letter-spacing:0.138px;">toGMTString() : "") +</span><span class="t" style="left:0.00px;top:439.30px;font-size:17.2px;color:#8e8e8e;width:30.5px;text-align:right;letter-spacing:-0.6px;">12</span><span class="t" style="left:0.00px;top:461.34px;font-size:17.2px;color:#8e8e8e;width:30.5px;text-align:right;letter-spacing:-0.6px;">13</span><span class="t" id="p3c15" style="left:39.30px;top:461.48px;font-size:16.8px;color:#1f2233;letter-spacing:0.032px;">((path) ? "; path=" + path : "") +</span><span class="t" style="left:0.00px;top:483.38px;font-size:17.2px;color:#8e8e8e;width:30.5px;text-align:right;letter-spacing:-0.6px;">14</span><span class="t" style="left:0.00px;top:505.42px;font-size:17.2px;color:#8e8e8e;width:30.5px;text-align:right;letter-spacing:-0.6px;">15</span><span class="t" id="p3c17" style="left:39.30px;top:505.56px;font-size:16.8px;color:#1f2233;letter-spacing:-0.101px;">((domain) ? "; domain=" + domain : "") +</span><span class="t" style="left:0.00px;top:527.46px;font-size:17.2px;color:#8e8e8e;width:30.5px;text-align:right;letter-spacing:-0.6px;">16</span><span class="t" style="left:0.00px;top:549.50px;font-size:17.2px;color:#8e8e8e;width:30.5px;text-align:right;letter-spacing:-0.6px;">17</span><span class="t" id="p3c19" style="left:39.30px;top:549.64px;font-size:16.8px;color:#1f2233;letter-spacing:-0.233px;">((secure) ? "; secure" : "")</span><span class="t" style="left:0.00px;top:571.54px;font-size:17.2px;color:#8e8e8e;width:30.5px;text-align:right;letter-spacing:-0.6px;">18</span><span class="t" style="left:0.00px;top:593.58px;font-size:17.2px;color:#8e8e8e;width:30.5px;text-align:right;letter-spacing:-0.6px;">19</span><span class="t" id="p3c21" style="left:39.30px;top:593.72px;font-size:16.8px;color:#1f2233;letter-spacing:0.045px;">if (!caution || (name + "=" + escape(value)).</span><span class="t" id="p3c22" style="left:39.30px;top:615.76px;font-size:16.8px;color:#1f2233;letter-spacing:0.141px;">length &lt;= 4000)</span><span class="t" style="left:0.00px;top:637.66px;font-size:17.2px;color:#8e8e8e;width:30.5px;text-align:right;letter-spacing:-0.6px;">20</span><span class="t" style="left:0.00px;top:659.70px;font-size:17.2px;color:#8e8e8e;width:30.5px;text-align:right;letter-spacing:-0.6px;">21</span><span class="t" id="p3c24" style="left:39.30px;top:659.84px;font-size:16.8px;color:#1f2233;letter-spacing:0.198px;">document.cookie = curCookie</span><span class="t" style="left:0.00px;top:681.74px;font-size:17.2px;color:#8e8e8e;width:30.5px;text-align:right;letter-spacing:-0.6px;">22</span><span class="t" style="left:0.00px;top:703.78px;font-size:17.2px;color:#8e8e8e;width:30.5px;text-align:right;letter-spacing:-0.6px;">23</span><span class="t" id="p3c26" style="left:39.30px;top:703.92px;font-size:16.8px;color:#1f2233;letter-spacing:-0.174px;">else</span></div></div>
<i class="abs" style="left:0;top:716.500px;width:382px;height:1.500px;background:#cfcfcf"></i><i class="abs" style="left:0;top:718px;width:382px;height:82px;background:#eeeeee"></i><svg style="left:12.199999999999989px;top:731px" width="19.4" height="15.6" viewBox="0 0 19.4 15.6"><path d="M1.200 0H7.600V1.400H17.600V4H1.200Z" fill="#676767" /><path d="M0 5.800H19.400L18 14.600Q17.900 15.600 16.900 15.600H2.500Q1.500 15.600 1.400 14.600Z" fill="#676767" /></svg><svg style="left:55px;top:728px" width="18" height="22" viewBox="0 0 18 22"><rect x="0.900" y="3.400" width="16.200" height="17.700" fill="none" stroke="#676767" stroke-width="1.700"/><path d="M4.500 3.800V2H7.200L9 0L10.800 2H13.500V3.800Z" fill="#676767" /><path d="M4.300 8.500H12M4.300 11.200H10M4.300 13.900H12M4.300 16.600H9" stroke="#b9b9b9" stroke-width="1.100" fill="none"/></svg><svg style="left:108.30000000000001px;top:739.4px" width="1" height="1" viewBox="0 0 1 1"><g><path d="M-6.300 0.400A6.300 6.300 0 1 1 3.200 5.600" fill="none" stroke="#bcbcbc" stroke-width="2.300" stroke-linecap="round"/><path d="M-12 -4.500L-4.800 -0.400L-11.300 2.800Z" fill="#bcbcbc" /></g></svg><svg style="left:145.70000000000005px;top:739.4px" width="1" height="1" viewBox="0 0 1 1"><g transform="scale(-1,1)"><path d="M-6.300 0.400A6.300 6.300 0 1 1 3.200 5.600" fill="none" stroke="#bcbcbc" stroke-width="2.300" stroke-linecap="round"/><path d="M-12 -4.500L-4.800 -0.400L-11.300 2.800Z" fill="#bcbcbc" /></g></svg><svg style="left:181.60000000000002px;top:731px" width="17.5" height="17.5" viewBox="0 0 17.5 17.5"><circle cx="6.200" cy="6.200" r="5.300" fill="none" stroke="#676767" stroke-width="1.600"/><path d="M10.600 10.600L15.600 15.300" stroke="#676767" stroke-width="2.900" stroke-linecap="round"/></svg><svg style="left:222.60000000000002px;top:731.5px" width="19.4" height="15" viewBox="0 0 19.4 15"><path d="M18.600 7.500H1.200M8 0.800L1.200 7.500L8 14.200" fill="none" stroke="#676767" stroke-width="1.900" stroke-linecap="round" stroke-linejoin="round"/></svg><svg style="left:264.20000000000005px;top:731.5px" width="19.4" height="15" viewBox="0 0 19.4 15"><path d="M0.800 7.500H18.200M11.400 0.800L18.200 7.500L11.400 14.200" fill="none" stroke="#676767" stroke-width="1.900" stroke-linecap="round" stroke-linejoin="round"/></svg><svg style="left:307.79999999999995px;top:730.4px" width="17.4" height="17.4" viewBox="0 0 18.800 18"><path d="M0 0H4.700V6.200H14.100V0H18.800V18H0Z" fill="#c6c6c6" /><rect x="8.300" y="0" width="1.700" height="4.400" fill="#c6c6c6"/><rect x="2" y="13.600" width="14.800" height="2.300" fill="#ececec"/></svg><svg style="left:352px;top:732px" width="15" height="14" viewBox="0 0 15 14"><path d="M0.800 0.800L14.200 13.200M14.200 0.800L0.800 13.200" stroke="#676767" stroke-width="1.500" stroke-linecap="round"/></svg><svg style="left:100.5px;top:774.5px" width="16" height="18" viewBox="0 0 16 18"><path d="M14.800 1.200V16.800L1.400 9Z" fill="none" stroke="#7b7b7b" stroke-width="1.500" stroke-linejoin="round"/></svg><svg style="left:181px;top:774.0px" width="18.4" height="18.4" viewBox="0 0 18.4 18.4"><circle cx="9.200" cy="9.200" r="8.300" fill="none" stroke="#7b7b7b" stroke-width="1.500"/></svg><svg style="left:263px;top:775.5px" width="15.6" height="15.6" viewBox="0 0 15.6 15.6"><rect x="0.800" y="0.800" width="14" height="14" rx="1.600" fill="none" stroke="#7b7b7b" stroke-width="1.500"/></svg><div class="abs" style="left:172px;top:31px;width:206px;height:560px;background:#fafafa;border-radius:2px;box-shadow:0 1px 3px rgba(0,0,0,.16),0 7px 16px rgba(0,0,0,.20)"></div>
<span class="t" style="left:223.60px;top:48.05px;font-size:16.5px;color:#2f2f2f;font-weight:500;">查找</span><span class="t" style="left:223.60px;top:99.05px;font-size:16.5px;color:#c4c4c4;font-weight:500;">分享</span><span class="t" style="left:223.60px;top:150.05px;font-size:16.5px;color:#2f2f2f;font-weight:500;">行定位</span><span class="t" style="left:223.60px;top:201.05px;font-size:16.5px;color:#2f2f2f;font-weight:500;">语法</span><span class="t" style="left:223.60px;top:252.05px;font-size:16.5px;color:#2f2f2f;font-weight:500;">编码</span><span class="t" style="left:223.60px;top:303.05px;font-size:16.5px;color:#2f2f2f;font-weight:500;">视觉样式</span><span class="t" style="left:223.60px;top:354.05px;font-size:16.5px;color:#2f2f2f;font-weight:500;">统计</span><span class="t" style="left:223.60px;top:405.05px;font-size:16.5px;color:#2f2f2f;font-weight:500;">打印</span><span class="t" style="left:223.60px;top:456.05px;font-size:16.5px;color:#2f2f2f;font-weight:500;">迷你工具栏</span><span class="t" style="left:223.60px;top:507.05px;font-size:16.5px;color:#2f2f2f;font-weight:500;">自动换行</span><span class="t" style="left:223.60px;top:558.05px;font-size:16.5px;color:#2f2f2f;font-weight:500;">只读</span><svg style="left:186px;top:45px" width="24" height="23" viewBox="0 0 24 23"><circle cx="8.800" cy="9.200" r="7.700" fill="none" stroke="#8b8b8b" stroke-width="1.700"/><path d="M15 15.200L21.600 21" stroke="#8b8b8b" stroke-width="3.600" stroke-linecap="round"/></svg><svg style="left:186px;top:96px" width="24" height="23" viewBox="0 0 24 23"><path d="M20 3.900L4 11.500L20 19.100" fill="none" stroke="#cbcbcb" stroke-width="2.100" stroke-linejoin="round"/><circle cx="20" cy="3.900" r="3.700" fill="#cbcbcb"/><circle cx="4" cy="11.500" r="3.700" fill="#cbcbcb"/><circle cx="20" cy="19.100" r="3.700" fill="#cbcbcb"/></svg><svg style="left:186px;top:153px" width="23" height="12.4" viewBox="0 0 23 12.4"><path d="M0 0L11 6.200L0 12.400ZM11.600 0L23 6.200L11.600 12.400Z" fill="#8b8b8b" /></svg><svg style="left:185px;top:197px" width="25" height="25.4" viewBox="0 0 25 25.4"><path d="M7.400 11.400L19.400 0.700Q20.600 -0.300 21.700 0.900L22.900 2.300Q23.800 3.500 22.700 4.600L11.300 16.600Q10.600 17.200 9.800 17.200H9.200Z" fill="#8b8b8b" /><path d="M5.800 12.800L8.200 17.200H3.200Z" fill="#8b8b8b" /><path d="M0 20.600H24.500V24H0Z" fill="#8b8b8b" /></svg><svg style="left:187px;top:248px" width="22" height="25" viewBox="0 0 22 25"><path d="M8.600 0.500L4.800 24.500M17.600 0.500L13.800 24.500M1.600 8H22M0 17H20.400" fill="none" stroke="#8b8b8b" stroke-width="2.300"/></svg><svg style="left:184.0px;top:298.0px" width="27" height="27" viewBox="0 0 24 24"><path d="M12 12c0-3 2.5-5.500 5.500-5.500S23 9 23 12H12zm0 0c0 3-2.500 5.500-5.500 5.500S1 15 1 12h11zm0 0c-3 0-5.500-2.500-5.500-5.500S9 1 12 1v11zm0 0c3 0 5.500 2.500 5.500 5.500S15 23 12 23V12z" fill="#8b8b8b" /></svg><svg style="left:187.60000000000002px;top:352.6px" width="20.4" height="19.4" viewBox="0 0 20.4 19.4"><path d="M0 4.400H4.400V19.400H0ZM8 0H12.400V19.400H8ZM16 10.600H20.400V19.400H16Z" fill="#8b8b8b" /></svg><svg style="left:181.0px;top:396.2px" width="33.6" height="33.6" viewBox="0 0 24 24"><path d="M19 8H5c-1.66 0-3 1.340-3 3v6h4v4h12v-4h4v-6c0-1.660-1.340-3-3-3zm-3 11H8v-5h8v5zm3-7c-.55 0-1-.45-1-1s.45-1 1-1 1 .45 1 1-.45 1-1 1zm-1-9H6v4h12V3z" fill="#8b8b8b" /></svg><svg style="left:186px;top:453.4px" width="23" height="21.6" viewBox="0 0 23 21.6"><path d="M6 13H1.700Q0.900 13 0.900 12.200V1.700Q0.900 0.900 1.700 0.900H21.300Q22.100 0.900 22.100 1.700V12.200Q22.100 13 21.300 13H17.500" fill="none" stroke="#8b8b8b" stroke-width="1.700"/><circle cx="11.500" cy="7.800" r="3.500" fill="none" stroke="#8b8b8b" stroke-width="1.400"/><path d="M10.300 7.600Q10.300 6.400 11.500 6.400Q12.700 6.400 12.700 7.600V12.500L17.800 14.200Q18.800 14.600 18.600 15.700L17.800 20.400Q17.600 21.600 16.400 21.600H11.200Q10.300 21.600 9.700 21L5.800 17L6.600 16.200Q7.200 15.700 8 15.900L10.300 16.600Z" fill="#8b8b8b" /></svg><svg style="left:187px;top:506px" width="23" height="17.4" viewBox="0 0 23 17.4"><path d="M0 1H21.500M0 8.400H17.200Q21.800 8.400 21.800 12.300Q21.800 16 17.500 16H13.500M0 16H7" fill="none" stroke="#8b8b8b" stroke-width="1.900"/><path d="M14.600 12.600V19.400L10.400 16Z" fill="#8b8b8b" /></svg><svg style="left:186px;top:552px" width="23" height="29" viewBox="0 0 23 29"><path d="M2.800 10.800H20.200Q23 10.800 23 13.600V26.200Q23 29 20.200 29H2.800Q0 29 0 26.200V13.600Q0 10.800 2.800 10.800Z" fill="#8b8b8b" /><path d="M4.900 11V7.600Q4.900 1.300 11.500 1.300Q18.100 1.300 18.100 7.600V11" fill="none" stroke="#8b8b8b" stroke-width="2.600"/><circle cx="11.500" cy="19.700" r="2.500" fill="#fafafa"/></svg><svg style="left:336px;top:455.2px" width="19" height="18.6" viewBox="0 0 19 18.6"><rect x="0" y="0" width="19" height="18.600" rx="2.600" fill="#43a047"/><path d="M3.900 9.600L7.700 13.300L15.300 5.300" fill="none" stroke="#fff" stroke-width="2.100" stroke-linecap="round" stroke-linejoin="round"/></svg><svg style="left:336px;top:506px" width="19" height="18.6" viewBox="0 0 19 18.6"><rect x="0" y="0" width="19" height="18.600" rx="2.600" fill="#43a047"/><path d="M3.900 9.600L7.700 13.300L15.300 5.300" fill="none" stroke="#fff" stroke-width="2.100" stroke-linecap="round" stroke-linejoin="round"/></svg><svg style="left:336px;top:557px" width="19" height="18.6" viewBox="0 0 19 18.6"><rect x="0.900" y="0.900" width="17.200" height="16.800" rx="2.200" fill="none" stroke="#7d7d7d" stroke-width="1.800"/></svg><i class="abs" style="left:0;top:0;width:1.200px;height:800px;background:rgba(255,255,255,.45)"></i><i class="abs" style="left:379px;top:0;width:3px;height:800px;background:#fcfcfc"></i>
</div>
</body>
</html>
